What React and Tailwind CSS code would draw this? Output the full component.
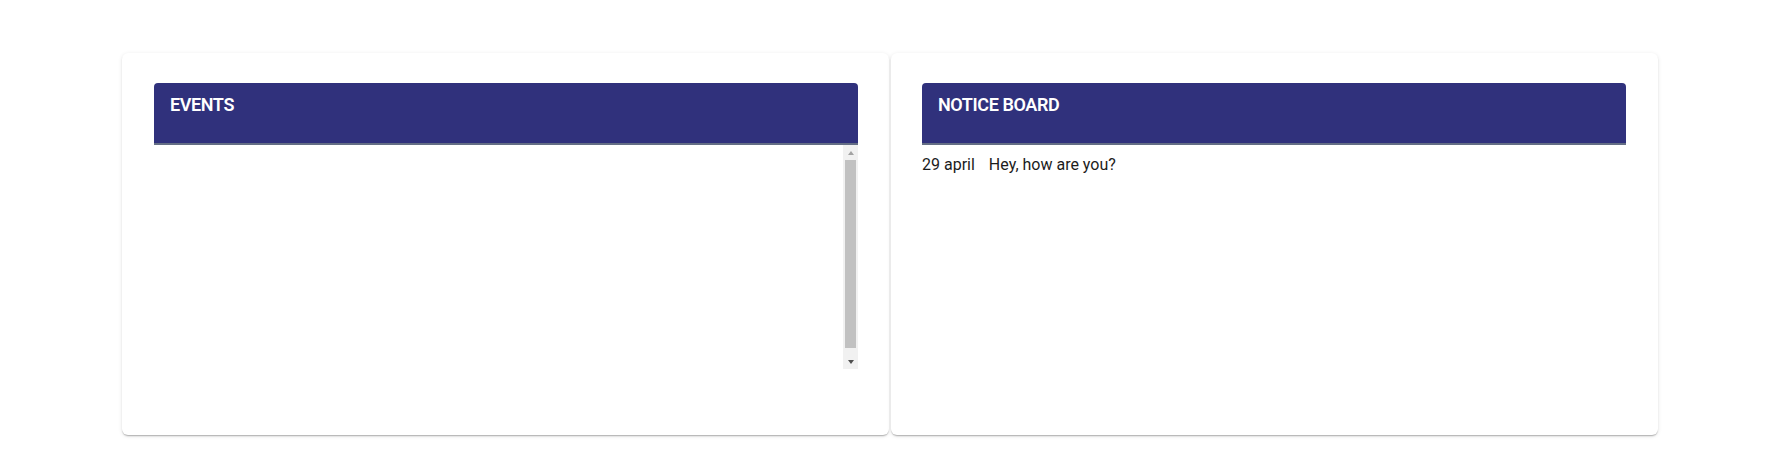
export default function App() {
  return (
    <div className="min-h-screen bg-white pt-[53px] font-['Roboto',sans-serif]">
      <div className="w-[1536px] ml-[122px] grid grid-cols-2 gap-[2px]">

        {/* Events */}
        <div className="bg-white rounded-md pl-8 pr-[31px] pt-[30px] pb-[66px] shadow-[0px_2px_2px_-1px_rgba(0,0,0,0.2),0px_1px_1px_0px_rgba(0,0,0,0.1),0px_1px_4px_0px_rgba(0,0,0,0.1)]">
          <div className="h-[62px] bg-[#30317c] rounded-t border-b-2 border-[#646e85] px-4 pt-[8px]">
            <h2 className="text-white text-[18px] font-semibold tracking-[-0.4px] leading-7">EVENTS</h2>
          </div>
          <div className="h-[224px] flex justify-end">
            {/* scrollbar */}
            <div className="w-[15px] h-full bg-[#f1f1f1] flex flex-col">
              <div className="h-[15px] flex items-center justify-center">
                <div className="w-0 h-0 border-l-[3.5px] border-r-[3.5px] border-b-[4px] border-l-transparent border-r-transparent border-b-[#a3a3a3]" />
              </div>
              <div className="h-[188px] mx-[2px] bg-[#c1c1c1]" />
              <div className="flex-1 flex items-end">
                <div className="h-[15px] w-full flex items-center justify-center">
                  <div className="w-0 h-0 border-l-[3.5px] border-r-[3.5px] border-t-[4px] border-l-transparent border-r-transparent border-t-[#505050]" />
                </div>
              </div>
            </div>
          </div>
        </div>

        {/* Notice Board */}
        <div className="bg-white rounded-md pl-[31px] pr-8 pt-[30px] pb-[66px] shadow-[0px_2px_2px_-1px_rgba(0,0,0,0.2),0px_1px_1px_0px_rgba(0,0,0,0.1),0px_1px_4px_0px_rgba(0,0,0,0.1)]">
          <div className="h-[62px] bg-[#30317c] rounded-t border-b-2 border-[#646e85] px-4 pt-[8px]">
            <h2 className="text-white text-[18px] font-semibold tracking-[-0.4px] leading-7">NOTICE BOARD</h2>
          </div>
          <div className="h-[224px] pt-2">
            <div className="flex gap-[14px] text-[16px] leading-6 text-[#1c1c1c]">
              <span>29 april</span>
              <span>Hey, how are you?</span>
            </div>
          </div>
        </div>

      </div>
    </div>
  );
}
